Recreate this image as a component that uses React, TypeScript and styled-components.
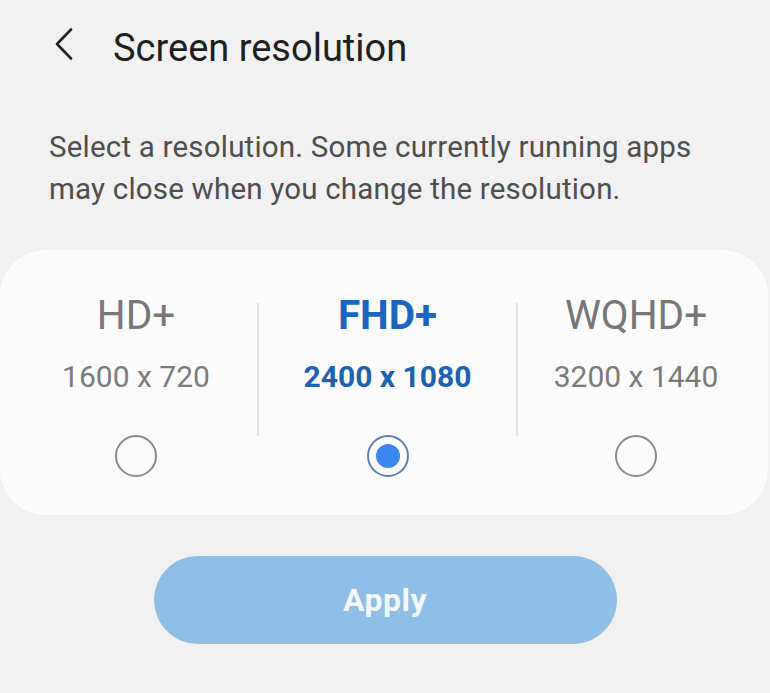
import * as React from 'react'
import styled, { createGlobalStyle } from 'styled-components'

interface Option {
  name: string
  size: string
}

const options: Option[] = [
  { name: 'HD+', size: '1600 x 720' },
  { name: 'FHD+', size: '2400 x 1080' },
  { name: 'WQHD+', size: '3200 x 1440' },
]

const App: React.FC = () => {
  const [selected, setSelected] = React.useState<number>(1)

  return (
    <>
      <GlobalStyle />
      <Page>
        <Header>
          <BackButton aria-label='back'>
            <svg width='20' height='32' viewBox='0 0 20 32' fill='none'>
              <path
                d='M17 1.5 L3 16 L17 30.5'
                stroke='#222'
                strokeWidth='2.6'
                strokeLinecap='round'
                strokeLinejoin='round'
              />
            </svg>
          </BackButton>
          <Title>Screen resolution</Title>
        </Header>
        <Description>
          Select a resolution. Some currently running apps may close when you
          change the resolution.
        </Description>
        <Card>
          {options.map((o, i) => (
            <React.Fragment key={o.name}>
              {i > 0 && <Divider />}
              <Column onClick={() => setSelected(i)}>
                <Name $active={i === selected}>{o.name}</Name>
                <Size $active={i === selected}>{o.size}</Size>
                <Radio $active={i === selected} />
              </Column>
            </React.Fragment>
          ))}
        </Card>
        <ApplyButton>Apply</ApplyButton>
      </Page>
    </>
  )
}

export default App

const GlobalStyle = createGlobalStyle`
  body {
    margin: 0;
    background: #f1f1f1;
    font-family: Roboto, 'Noto Sans', sans-serif;
  }
`
const Page = styled.div`
  width: 770px;
  height: 693px;
  display: flex;
  flex-direction: column;
  overflow: hidden;
`
const Header = styled.div`
  display: flex;
  align-items: flex-start;
  padding: 26px 0 0 54px;
  height: 44px;
`
const BackButton = styled.button`
  display: flex;
  padding: 2px 0 0;
  border: none;
  background: none;
  width: 59px;
`
const Title = styled.h1`
  margin: 0;
  font-size: 38px;
  line-height: 44px;
  font-weight: 400;
  color: #1f1f1f;
`
const Description = styled.p`
  margin: 56px 60px 0 49px;
  font-size: 29.5px;
  line-height: 42px;
  letter-spacing: 0.2px;
  color: #4e4e4e;
`
const Card = styled.div`
  margin: 40px 2px 0 0;
  height: 265px;
  box-sizing: border-box;
  padding: 0 14px 0 15px;
  display: grid;
  grid-template-columns: 242px 2px 257px 2px 1fr;
  background: #fcfcfc;
  border-radius: 46px;
`
const Divider = styled.div`
  width: 2px;
  height: 133px;
  margin-top: 53px;
  background: #e2e2e2;
`
const Column = styled.div`
  display: flex;
  flex-direction: column;
  align-items: center;
  padding-top: 42px;
  cursor: pointer;
`
const Name = styled.div<{ $active: boolean }>`
  font-size: 40.5px;
  line-height: 46px;
  font-weight: ${p => (p.$active ? 700 : 400)};
  color: ${p => (p.$active ? '#1a66bf' : '#777')};
`
const Size = styled.div<{ $active: boolean }>`
  margin-top: 21px;
  font-size: 30px;
  line-height: 36px;
  font-weight: ${p => (p.$active ? 700 : 400)};
  color: ${p => (p.$active ? '#1d62b0' : '#7b7b7b')};
`
const Radio = styled.span<{ $active: boolean }>`
  margin-top: 40px;
  width: 42px;
  height: 42px;
  box-sizing: border-box;
  border-radius: 50%;
  border: 2px solid ${p => (p.$active ? '#5b80aa' : '#8a8a8a')};
  display: flex;
  align-items: center;
  justify-content: center;
  &::after {
    content: '';
    width: 24px;
    height: 24px;
    border-radius: 50%;
    background: #3d87f0;
    display: ${p => (p.$active ? 'block' : 'none')};
  }
`
const ApplyButton = styled.button`
  margin: 41px auto 0;
  width: 463px;
  height: 88px;
  border: none;
  border-radius: 44px;
  background: #8fbee6;
  color: #f3f8fd;
  font-family: Roboto, 'Noto Sans', sans-serif;
  font-size: 32px;
  letter-spacing: 0.5px;
  font-weight: 700;
`
